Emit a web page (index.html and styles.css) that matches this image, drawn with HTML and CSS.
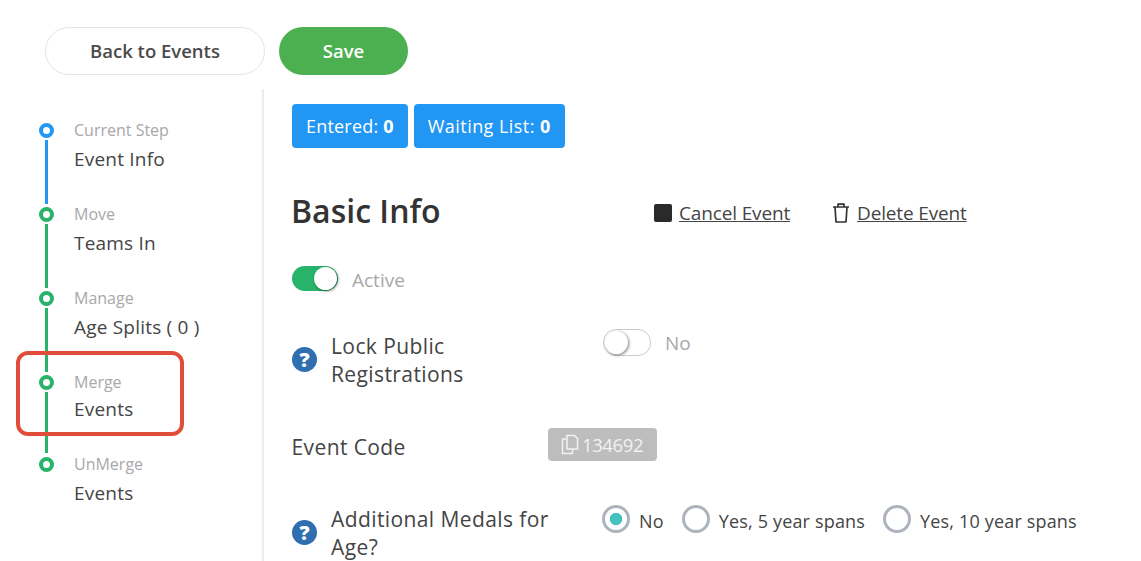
FILE: index.html
```html
<!DOCTYPE html>
<html lang="en">
<head>
<meta charset="utf-8">
<title>Event Info</title>
<link rel="stylesheet" href="styles.css">
</head>
<body>
<div class="page">
  <header class="topbar">
    <button class="btn btn-back">Back to Events</button>
    <button class="btn btn-save">Save</button>
  </header>
  <div class="main">
    <nav class="steps">
      <div class="step step-current">
        <span class="dot"></span>
        <div class="step-small">Current Step</div>
        <div class="step-big">Event Info</div>
      </div>
      <div class="step">
        <span class="dot"></span>
        <div class="step-small">Move</div>
        <div class="step-big">Teams In</div>
      </div>
      <div class="step">
        <span class="dot"></span>
        <div class="step-small">Manage</div>
        <div class="step-big">Age Splits ( 0 )</div>
      </div>
      <div class="step step-merge">
        <span class="dot"></span>
        <div class="step-small">Merge</div>
        <div class="step-big">Events</div>
        <div class="highlight"></div>
      </div>
      <div class="step step-last">
        <span class="dot"></span>
        <div class="step-small">UnMerge</div>
        <div class="step-big">Events</div>
      </div>
    </nav>
    <section class="content">
      <div class="badges">
        <span class="badge">Entered: <b>0</b></span>
        <span class="badge badge-wait">Waiting List: <b>0</b></span>
      </div>
      <div class="title-row">
        <h1 class="title">Basic Info</h1>
        <div class="actions">
          <span class="action action-cancel"><span class="stop-icon"></span><a class="link">Cancel Event</a></span>
          <span class="action action-delete">
            <svg class="trash" width="18" height="22" viewBox="0 0 18 22" fill="none" stroke="#333" stroke-width="1.7"><path d="M1 5h16M6 5V2.200h6V5M3 5l1 15h10l1-15" stroke-linejoin="round"/></svg>
            <a class="link">Delete Event</a>
          </span>
        </div>
      </div>
      <div class="active-row">
        <span class="switch switch-on"><span class="knob"></span></span>
        <span class="muted active-text">Active</span>
      </div>
      <div class="form-row row-lock">
        <div class="label-cell">
          <span class="help">?</span>
          <span class="label">Lock Public<br>Registrations</span>
        </div>
        <div class="control-lock">
          <span class="switch switch-off"><span class="knob"></span></span>
          <span class="muted no-text">No</span>
        </div>
      </div>
      <div class="form-row row-code">
        <div class="label-cell label-cell-code"><span class="label">Event Code</span></div>
        <div class="code-wrap">
          <span class="code">
            <svg width="18" height="21" viewBox="0 0 18 21" fill="none" stroke="#f2f2f2" stroke-width="1.5"><path d="M6 1.500h7.500l3 3V15H6zM6 5H1.500v14.500H11.500V15"/></svg>134692</span>
        </div>
      </div>
      <div class="form-row row-medals">
        <div class="label-cell">
          <span class="help">?</span>
          <span class="label">Additional Medals for<br>Age?</span>
        </div>
        <div class="radios">
          <span class="radio radio-on"></span><span class="radio-text">No</span>
          <span class="radio"></span><span class="radio-text">Yes, 5 year spans</span>
          <span class="radio"></span><span class="radio-text">Yes, 10 year spans</span>
        </div>
      </div>
    </section>
  </div>
</div>
</body>
</html>
```

FILE: styles.css
```css
* { box-sizing: border-box; }
html, body { margin: 0; padding: 0; height: 100%; overflow: hidden; background: #fff; }
body { font-family: "Open Sans", "Noto Sans", sans-serif; color: #3a3a3a; }
.page { width: 1141px; height: 561px; overflow: hidden; }

.topbar { display: flex; gap: 14px; padding: 27px 0 0 45px; height: 89px; }
.btn { height: 48px; padding: 0 0 2px; border-radius: 24px; font-family: inherit; font-size: 18.500px; font-weight: 600; }
.btn-back { width: 220px; background: #fff; border: 1px solid #e4e4e4; color: #4a4a4a; }
.btn-save { width: 129px; background: #4caf50; border: 0; color: #fff; }

.main { display: flex; height: 472px; }
.steps { width: 264px; flex: none; border-right: 2px solid #ececec; padding: 30px 0 0 74px; }
.step { position: relative; display: flex; flex-direction: column; height: 84px; }
.dot { position: absolute; left: -35px; top: 4px; width: 15px; height: 15px; border: 4px solid #27b36a; border-radius: 50%; background: #fff; }
.step::before { content: ""; position: absolute; left: -29px; top: 21px; width: 3px; height: 64px; background: #27b36a; }
.step-current .dot { border-color: #2196f3; }
.step-current::before { background: #2196f3; }
.step-merge { height: 82px; }
.step-merge::before { height: 61px; }
.step-last::before { display: none; }
.step-small { font-size: 16px; line-height: 22px; color: #a8a8a8; }
.step-big { font-size: 19px; line-height: 30px; margin-top: 3px; color: #444; letter-spacing: 0.2px; }
.step-merge .step-big { margin-top: 1px; }
.highlight { position: absolute; left: -58px; top: -20px; width: 168px; height: 85px; border: 4px solid #e04e39; border-radius: 12px; }

.content { flex: 1; padding: 15px 0 0 28px; }
.badges { display: flex; gap: 6px; height: 44px; }
.badge { display: block; height: 44px; line-height: 44px; padding: 0 14px; background: #2196f3; color: #fff; border-radius: 4px; font-size: 18px; letter-spacing: 0.2px; white-space: pre; }
.badge-wait { letter-spacing: 0.45px; }
.badge b { font-weight: 700; }

.title-row { display: flex; align-items: center; height: 46px; margin-top: 40px; }
.title { margin: 0 0 0 -1px; width: 363px; font-size: 32px; font-weight: 600; color: #333; line-height: 46px; }
.actions { display: flex; align-items: center; padding-top: 3px; }
.action { display: flex; align-items: center; font-size: 19px; letter-spacing: -0.15px; }
.link { text-decoration: underline; color: #444; }
.stop-icon { display: block; width: 18px; height: 18px; background: #2a2a2a; border-radius: 2px; margin-right: 7px; }
.action-delete { margin-left: 42px; }
.trash { margin-right: 7px; }

.active-row { display: flex; align-items: center; gap: 14px; margin-top: 31px; height: 26px; }
.active-text { padding-top: 3px; }
.muted { color: #a8a8a8; font-size: 19px; }
.switch { position: relative; display: block; width: 46px; height: 25px; border-radius: 13px; }
.switch-on { background: #27b36a; }
.switch-off { width: 48px; height: 27px; background: #fff; border: 1px solid #ccc; }
.knob { position: absolute; top: 1px; width: 23px; height: 23px; border-radius: 50%; background: #fff; box-shadow: 1px 1px 3px rgba(0,0,0,.5); }
.switch-on .knob { right: 1px; }
.switch-off .knob { left: 1px; }

.form-row { display: flex; }
.label-cell { width: 311px; flex: none; display: flex; align-items: center; gap: 14px; }
.label-cell-code { width: 256px; }
.label-cell-code .label { margin-left: -0.5px; }
.label { font-size: 21px; line-height: 28px; color: #444; letter-spacing: 0.4px; }
.help { display: flex; align-items: center; justify-content: center; width: 25px; height: 25px; margin-top: -2px; border-radius: 50%; background: #2f6fb0; color: #fff; font-size: 20px; font-weight: 800; flex: none; }

.row-lock { margin-top: 41px; height: 56px; }
.control-lock { display: flex; align-items: flex-start; gap: 14px; margin-top: -3px; }
.no-text { line-height: 29px; }

.row-code { margin-top: 42px; height: 33px; }
.code-wrap { margin-top: -2px; }
.code { display: inline-flex; align-items: center; gap: 3px; height: 33px; width: 109px; padding-left: 13px; background: #bdbdbd; border-radius: 4px; color: #f2f2f2; font-size: 18.500px; letter-spacing: -0.4px; }

.row-medals { margin-top: 42px; height: 56px; }
.radios { display: flex; align-items: center; height: 28px; margin-left: -1px; font-size: 18px; letter-spacing: 0.17px; }
.radio { display: block; width: 28px; height: 28px; border: 3px solid #aeb4bd; border-radius: 50%; background: #fff; margin-right: 9px; flex: none; }
.radio-on { background: radial-gradient(circle, #45c1bf 0 6px, #fff 6.500px); }
.radio-text { color: #444; margin-right: 18px; padding-top: 3px; white-space: nowrap; }
```
